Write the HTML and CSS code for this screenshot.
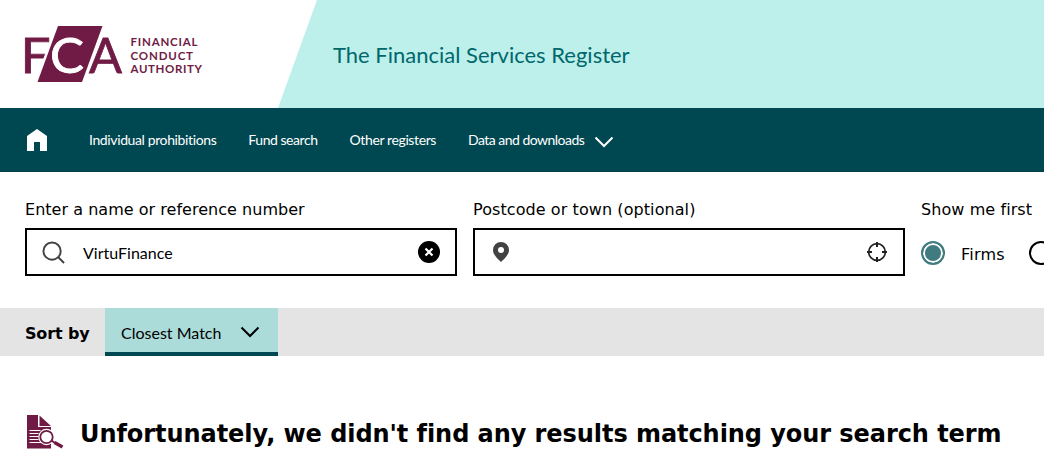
FILE: index.html
```
<!DOCTYPE html>
<html lang="en">
<head>
  <meta charset="UTF-8">
  <meta name="viewport" content="width=device-width, initial-scale=1.0">
  <title>The Financial Services Register</title>
  <link rel="stylesheet" href="styles.css">
</head>

<body>

  <header class="header">
    <a class="logo" href="#">
      <svg width="180" height="58" viewBox="0 0 180 58">
        <g fill="#701b45">
          <text class="logo-letter" stroke="#701b45" x="-4.500" y="48" textLength="30" lengthAdjust="spacingAndGlyphs">F</text>
          <path d="M33 1h44.500L57 57H12.500z" stroke="#fff" stroke-width="5" paint-order="stroke"/>
          <text class="logo-letter" stroke="#701b45" x="64" y="48" textLength="33" lengthAdjust="spacingAndGlyphs">A</text>
          <text class="logo-name" x="105.500" y="21" textLength="67">FINANCIAL</text>
          <text class="logo-name" x="105.500" y="34.700" textLength="62.500">CONDUCT</text>
          <text class="logo-name" x="105.500" y="48.300" textLength="71.500">AUTHORITY</text>
        </g>
        <text class="logo-letter" fill="#fff" stroke="#fff" x="25" y="48" textLength="34" lengthAdjust="spacingAndGlyphs">C</text>
      </svg>
    </a>
    <div class="banner">
      <h1>The Financial Services Register</h1>
    </div>
  </header>

  <nav class="nav">
    <a class="home" href="#" aria-label="Home">
      <svg width="20" height="22" viewBox="0 0 20 22"><path d="M10 0L0 7v15h7v-9h6v9h7V7z" fill="#fff"/></svg>
    </a>
    <a class="nav-prohibitions" href="#">Individual prohibitions</a>
    <a class="nav-fund" href="#">Fund search</a>
    <a class="nav-other" href="#">Other registers</a>
    <a class="nav-data" href="#">Data and downloads</a>
    <svg class="nav-arrow" width="20" height="12" viewBox="0 0 20 12"><path d="M1.500 1.500L10 10l8.500-8.500" fill="none" stroke="#fff" stroke-width="2"/></svg>
  </nav>

  <form class="search">
    <div class="field">
      <label for="name">Enter a name or reference number</label>
      <div class="input-box">
        <svg width="23" height="23" viewBox="0 0 24 24" fill="none" stroke="#424242" stroke-width="2"><circle cx="10.500" cy="10.500" r="9"/><path d="M17 17l6 6"/></svg>
        <input type="text" id="name" value="VirtuFinance">
        <svg width="22" height="22" viewBox="0 0 22 22"><circle cx="11" cy="11" r="11"/><path d="M7.500 7.500l7 7m0-7l-7 7" stroke="#fff" stroke-width="2.200"/></svg>
      </div>
    </div>
    <div class="field">
      <label class="town-label" for="town">Postcode or town (optional)</label>
      <div class="input-box town">
        <svg width="16" height="20" viewBox="0 0 16 20"><path fill="#424242" fill-rule="evenodd" d="M8 0a8 8 0 0 0-8 8c0 5 5 9 8 12 3-3 8-7 8-12a8 8 0 0 0-8-8zm0 5a3 3 0 1 1 0 6 3 3 0 0 1 0-6z"/></svg>
        <input type="text" id="town">
        <svg width="20" height="20" viewBox="0 0 20 20" fill="none" stroke="#222"><circle cx="10" cy="10" r="8.300" stroke-width="1.700"/><path d="M10 0v5m0 10v5M0 10h5m10 0h5" stroke-width="2"/></svg>
      </div>
    </div>
    <div class="show-first">
      <div class="legend">Show me first</div>
      <div class="radios">
        <span class="radio checked"></span>
        <span class="radio-label">Firms</span>
        <span class="radio"></span>
      </div>
    </div>
  </form>

  <div class="sort">
    <strong>Sort by</strong>
    <div class="sort-select">
      <span>Closest Match</span>
      <svg width="20" height="12" viewBox="0 0 20 12"><path d="M1.500 1.500L10 10l8.500-8.500" fill="none" stroke="#000" stroke-width="2"/></svg>
    </div>
  </div>

  <main class="results">
    <svg width="38" height="36" viewBox="0 0 38 36">
      <path d="M1 1h11v12h13v21.500H1zM13.500 1.500L25 12H13.500z" fill="#701b45"/>
      <path d="M3.500 16.500h11m-11 3h9m-9 3h9m-9 3h9m-9 3h12" stroke="#fff" stroke-width="1"/>
      <path d="M26 27l10.500 6" stroke="#fff" stroke-width="5"/>
      <circle cx="20.500" cy="23" r="7" fill="#fff" stroke="#fff" stroke-width="2.500"/>
      <circle cx="20.500" cy="23" r="6.200" fill="#fff" stroke="#701b45" stroke-width="1.800"/>
      <path d="M25.500 26.500l3.500 2.500" stroke="#701b45" stroke-width="2"/>
      <path d="M28.500 28.500l8 4.500" stroke="#701b45" stroke-width="3.500"/>
    </svg>
    <h2>Unfortunately, we didn't find any results matching your search term</h2>
  </main>

</body>
</html>
```
FILE: styles.css
```
* {
  box-sizing: border-box;
}

body {
  margin: 0;
  background: #fff;
  color: #000;
  font-family: Verdana, "DejaVu Sans", sans-serif;
  font-size: 16px;
  overflow: hidden;
}

h1,
h2 {
  margin: 0;
}

svg {
  display: block;
  flex-shrink: 0;
  overflow: visible;
}

.header {
  display: flex;
  height: 108px;
}

.logo {
  width: 278px;
  padding: 25px 0 0 25px;
}

.logo-letter {
  font-family: Lato, sans-serif;
  font-size: 48.5px;
  stroke-width: 0.8px;
}

.logo-name {
  font-family: Lato, sans-serif;
  font-size: 11.5px;
  font-weight: 700;
}

.banner {
  flex: 1;
  display: flex;
  align-items: center;
  padding: 0 0 0 55px;
  background: #bdefeb;
  clip-path: polygon(39px 0, 100% 0, 100% 100%, 0 100%);
}

.banner h1 {
  color: #00686d;
  font-family: Lato, sans-serif;
  font-size: 22px;
  font-weight: 400;
  white-space: nowrap;
}

.nav {
  display: flex;
  align-items: center;
  height: 64px;
  padding-left: 27px;
  background: #004851;
  border-bottom: 1px solid #003f48;
}

.nav a {
  margin-right: 32px;
  color: #fff;
  font-family: Lato, sans-serif;
  font-size: 14px;
  letter-spacing: -0.38px;
  text-decoration: none;
  white-space: nowrap;
}

.nav .home {
  margin-right: 42px;
}

.nav .nav-fund {
  letter-spacing: -0.45px;
}

.nav .nav-data {
  margin-right: 10px;
  letter-spacing: -0.52px;
}

.nav-arrow {
  margin-top: 4px;
}

.search {
  display: flex;
  gap: 16px;
  height: 136px;
  padding: 28px 0 0 25px;
}

.field {
  flex: 0 0 432px;
}

.field label,
.legend {
  display: block;
  height: 28px;
  line-height: 19px;
  letter-spacing: 0.03px;
  white-space: nowrap;
}

.field .town-label,
.legend {
  letter-spacing: 0.08px;
}

.input-box {
  display: flex;
  align-items: center;
  gap: 18px;
  height: 48px;
  padding: 0 15px;
  border: 2px solid #000;
}

.input-box.town {
  padding: 0 16px 0 18px;
}

.input-box input {
  flex: 1;
  min-width: 0;
  padding: 0;
  border: 0;
  outline: 0;
  font-family: Lato, sans-serif;
  font-size: 16px;
}

.show-first {
  flex: 0 0 auto;
}

.radios {
  display: flex;
  align-items: center;
  height: 50px;
}

.radio {
  width: 24px;
  height: 24px;
  border: 2px solid #000;
  border-radius: 50%;
}

.radio.checked {
  border-color: #407b7f;
  background: #407b7f;
  box-shadow: inset 0 0 0 2px #fff;
}

.radio-label {
  margin: 0 24px 0 16px;
  padding-top: 2px;
  letter-spacing: 0.25px;
}

.sort {
  display: flex;
  align-items: center;
  height: 48px;
  padding-left: 25px;
  background: #e4e4e4;
}

.sort strong {
  width: 80px;
  padding-top: 2px;
  letter-spacing: -0.15px;
  white-space: nowrap;
}

.sort-select {
  display: flex;
  align-items: center;
  justify-content: space-between;
  width: 173px;
  height: 48px;
  padding: 3px 18px 0 16px;
  background: #abdcd9;
  border-bottom: 4px solid #004851;
  font-family: Lato, sans-serif;
}

.sort-select span {
  padding-top: 2px;
}

.results {
  display: flex;
  align-items: center;
  gap: 16px;
  padding: 58px 0 0 26px;
}

.results h2 {
  padding-top: 3px;
  font-size: 24px;
  letter-spacing: -0.06px;
  white-space: nowrap;
}
```
